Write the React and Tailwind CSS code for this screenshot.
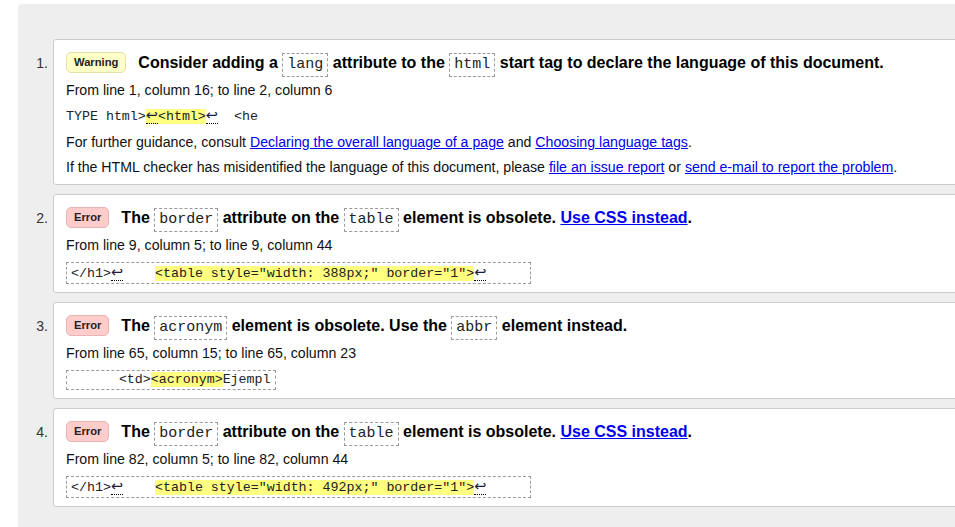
import React from "react";

const RET = "\u21A9";

function Code({ children }) {
    return (
        <code className="inline-block border border-dashed border-[#9a9a9a] px-[4px] py-[1px] leading-[20px] font-['Liberation_Mono','DejaVu_Sans_Mono',monospace] text-[15px] font-normal text-[#222]">
            {children}
        </code>
    );
}

function Ret() {
    return (
        <span className="border-b border-dotted border-black font-['DejaVu_Sans',sans-serif] text-[14.5px] leading-[18px] text-[#1a1a40]">
            {RET}
        </span>
    );
}

function Mark({ children }) {
    return <mark className="bg-[#ffff80] text-inherit">{children}</mark>;
}

function Badge({ type }) {
    const warn = type === "Warning";
    return (
        <span
            className={
                "inline-block align-middle relative -top-[1px] mr-[12px] rounded-[5px] border px-[7px] leading-[19px] text-[11.2px] font-bold text-[#222] " +
                (warn ? "bg-[#ffffc8] border-[#e4e0a8]" : "bg-[#ffcccc] border-[#e8b4b4]")
            }
        >
            {type}
        </span>
    );
}

function Item({ n, badge, title, from, children }) {
    return (
        <li className="flex">
            <div className="w-[35px] shrink-0 pr-[5px] pt-[11px] text-right text-[14px] leading-[26px] text-[#333]">
                {n}.
            </div>
            <div className="flex-1 rounded-[3px] border border-[#cccccc] bg-white px-[12px] pt-[10px] pb-[8px]">
                <div className="h-[26px] text-[16px] font-bold leading-[26px] text-black whitespace-nowrap">
                    <Badge type={badge} />
                    {title}
                </div>
                <p className="mt-[5px] h-[18px] text-[14.15px] leading-[18px] text-[#111]">{from}</p>
                {children}
            </div>
        </li>
    );
}

const codeLine =
    "whitespace-pre font-['Liberation_Mono','DejaVu_Sans_Mono',monospace] text-[13.3px] leading-[18px] text-[#222]";

const codeBox = codeLine + " mt-[8px] w-fit border border-dashed border-[#9a9a9a] px-[4px]";

export default function App() {
    return (
        <div className="h-[527px] w-[955px] overflow-hidden bg-white pl-[18px] pt-[4px] font-['Liberation_Sans',Arial,sans-serif]">
            <div className="-mr-[40px] h-[600px] rounded-tl-[4px] bg-[#eeeeee] pt-[35px]">
                <ol className="flex flex-col gap-[9px]">
                    <Item
                        n={1}
                        badge="Warning"
                        title={
                            <>
                                Consider adding a <Code>lang</Code> attribute to the <Code>html</Code> start tag to declare the language of this document.
                            </>
                        }
                        from="From line 1, column 16; to line 2, column 6"
                    >
                        <div className={codeLine + " mt-[7px] h-[20px] leading-[20px]"}>
                            TYPE html&gt;<Mark><Ret />&lt;html&gt;</Mark><Ret />{"  "}&lt;he
                        </div>
                        <p className="mt-[7px] h-[18px] text-[14.15px] leading-[18px] text-[#111]">
                            For further guidance, consult{" "}
                            <a href="#" className="text-[#0000ee] underline">Declaring the overall language of a page</a> and{" "}
                            <a href="#" className="text-[#0000ee] underline">Choosing language tags</a>.
                        </p>
                        <p className="mt-[7px] h-[18px] text-[14.15px] leading-[18px] text-[#111] whitespace-nowrap">
                            If the HTML checker has misidentified the language of this document, please{" "}
                            <a href="#" className="text-[#0000ee] underline">file an issue report</a> or{" "}
                            <a href="#" className="text-[#0000ee] underline">send e-mail to report the problem</a>.
                        </p>
                    </Item>

                    <Item
                        n={2}
                        badge="Error"
                        title={
                            <>
                                The <Code>border</Code> attribute on the <Code>table</Code> element is obsolete.{" "}
                                <a href="#" className="text-[#0000ee] underline">Use CSS instead</a>.
                            </>
                        }
                        from="From line 9, column 5; to line 9, column 44"
                    >
                        <div className={codeBox}>
                            &lt;/h1&gt;<Ret />{"    "}<Mark>&lt;table style="width: 388px;" border="1"&gt;</Mark><Ret />{"     "}
                        </div>
                    </Item>

                    <Item
                        n={3}
                        badge="Error"
                        title={
                            <>
                                The <Code>acronym</Code> element is obsolete. Use the <Code>abbr</Code> element instead.
                            </>
                        }
                        from="From line 65, column 15; to line 65, column 23"
                    >
                        <div className={codeBox}>
                            {"      "}&lt;td&gt;<Mark>&lt;acronym&gt;</Mark>Ejempl
                        </div>
                    </Item>

                    <Item
                        n={4}
                        badge="Error"
                        title={
                            <>
                                The <Code>border</Code> attribute on the <Code>table</Code> element is obsolete.{" "}
                                <a href="#" className="text-[#0000ee] underline">Use CSS instead</a>.
                            </>
                        }
                        from="From line 82, column 5; to line 82, column 44"
                    >
                        <div className={codeBox}>
                            &lt;/h1&gt;<Ret />{"    "}<Mark>&lt;table style="width: 492px;" border="1"&gt;</Mark><Ret />{"     "}
                        </div>
                    </Item>
                </ol>
            </div>
        </div>
    );
}
